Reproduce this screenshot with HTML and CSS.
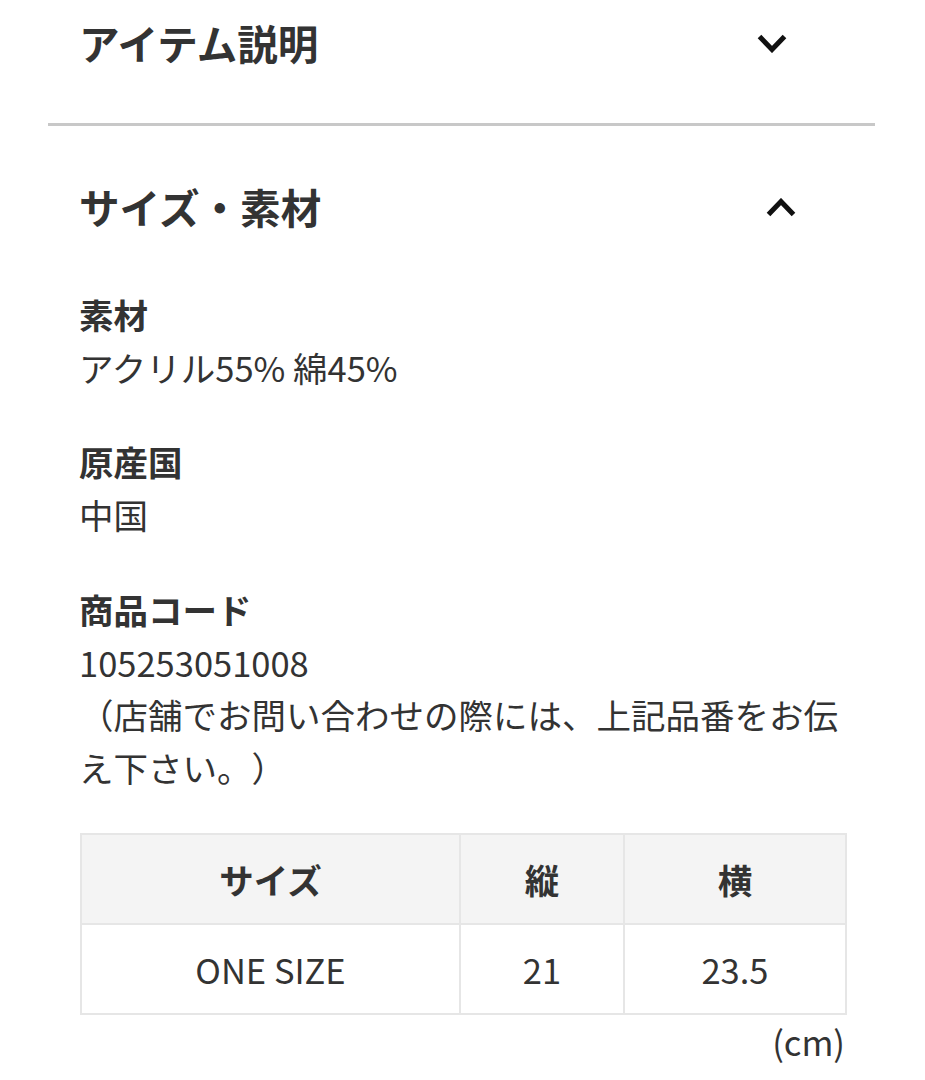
FILE: index.html
```html
<!DOCTYPE html>
<html lang="ja">
<head>
<meta charset="utf-8">
<title>サイズ・素材</title>
<link rel="stylesheet" href="styles.css">
</head>
<body>
<div class="accordion">
  <section class="acc-item acc-item--first">
    <div class="acc-head">
      <h2 class="acc-title">アイテム説明</h2>
      <svg class="chev chev--down" width="30" height="19" viewBox="0 0 30 19"><polyline points="2.5,2.5 15,15.5 27.5,2.5" fill="none" stroke="#111" stroke-width="5" stroke-linecap="butt" stroke-linejoin="miter"/></svg>
    </div>
  </section>
  <section class="acc-item acc-item--open">
    <div class="acc-head">
      <h2 class="acc-title">サイズ・素材</h2>
      <svg class="chev chev--up" width="30" height="19" viewBox="0 0 30 19"><polyline points="2.5,16.5 15,3.5 27.5,16.5" fill="none" stroke="#111" stroke-width="5" stroke-linecap="butt" stroke-linejoin="miter"/></svg>
    </div>
    <div class="acc-body">
      <dl class="spec">
        <div class="spec-group">
          <dt>素材</dt>
          <dd>アクリル55% 綿45%</dd>
        </div>
        <div class="spec-group">
          <dt>原産国</dt>
          <dd>中国</dd>
        </div>
        <div class="spec-group">
          <dt>商品コード</dt>
          <dd>105253051008<br>（店舗でお問い合わせの際には、上記品番をお伝え下さい。）</dd>
        </div>
      </dl>
      <table class="size-table">
        <colgroup>
          <col class="col-size">
          <col class="col-h">
          <col class="col-w">
        </colgroup>
        <thead>
          <tr><th>サイズ</th><th>縦</th><th>横</th></tr>
        </thead>
        <tbody>
          <tr><td>ONE SIZE</td><td>21</td><td>23.5</td></tr>
        </tbody>
      </table>
      <p class="unit">(cm)</p>
    </div>
  </section>
</div>
</body>
</html>
```

FILE: styles.css
```css
html, body {
  margin: 0;
  padding: 0;
  background: #ffffff;
}

body {
  font-family: "Noto Sans CJK JP", "Noto Sans", sans-serif;
  color: #333333;
  font-size: 34.5px;
  line-height: 52.9px;
  text-spacing-trim: space-all;
}

.accordion {
  margin-left: 48px;
  width: 827px;
}

.acc-item {
  border-bottom: 3px solid #c8c8c8;
}

.acc-item--open {
  border-bottom: none;
}

.acc-head {
  display: flex;
  align-items: center;
  justify-content: space-between;
  padding: 51px 0 50px 31px;
}

.acc-item--first .acc-head {
  padding-top: 13px;
}

.acc-item--open .acc-head {
  padding-bottom: 0;
}

.acc-title {
  margin: 0;
  font-size: 40.6px;
  line-height: 60px;
  font-weight: 700;
  color: #333333;
}

.chev {
  display: block;
  flex: none;
}

.chev--down {
  margin-right: 88px;
  margin-top: 1px;
}

.chev--up {
  margin-right: 79px;
  margin-top: 0;
}

.acc-body {
  padding: 51px 30px 0 31px;
}

.spec {
  margin: 0;
  display: flex;
  flex-direction: column;
  gap: 41.5px;
}

.spec dt {
  font-weight: 700;
}

.spec dd {
  margin: 0;
}

.size-table {
  margin-top: 39px;
  margin-left: 1px;
  width: 765px;
  border-collapse: collapse;
  table-layout: fixed;
}

.col-size { width: 379px; }
.col-h { width: 164px; }
.col-w { width: 222px; }

.size-table th,
.size-table td {
  border: 2px solid #e6e6e6;
  text-align: center;
  vertical-align: middle;
  padding: 0;
  height: 88px;
}

.size-table th {
  background: #f4f4f4;
  font-weight: 700;
}

.unit {
  margin: 0;
  text-align: right;
}
```
